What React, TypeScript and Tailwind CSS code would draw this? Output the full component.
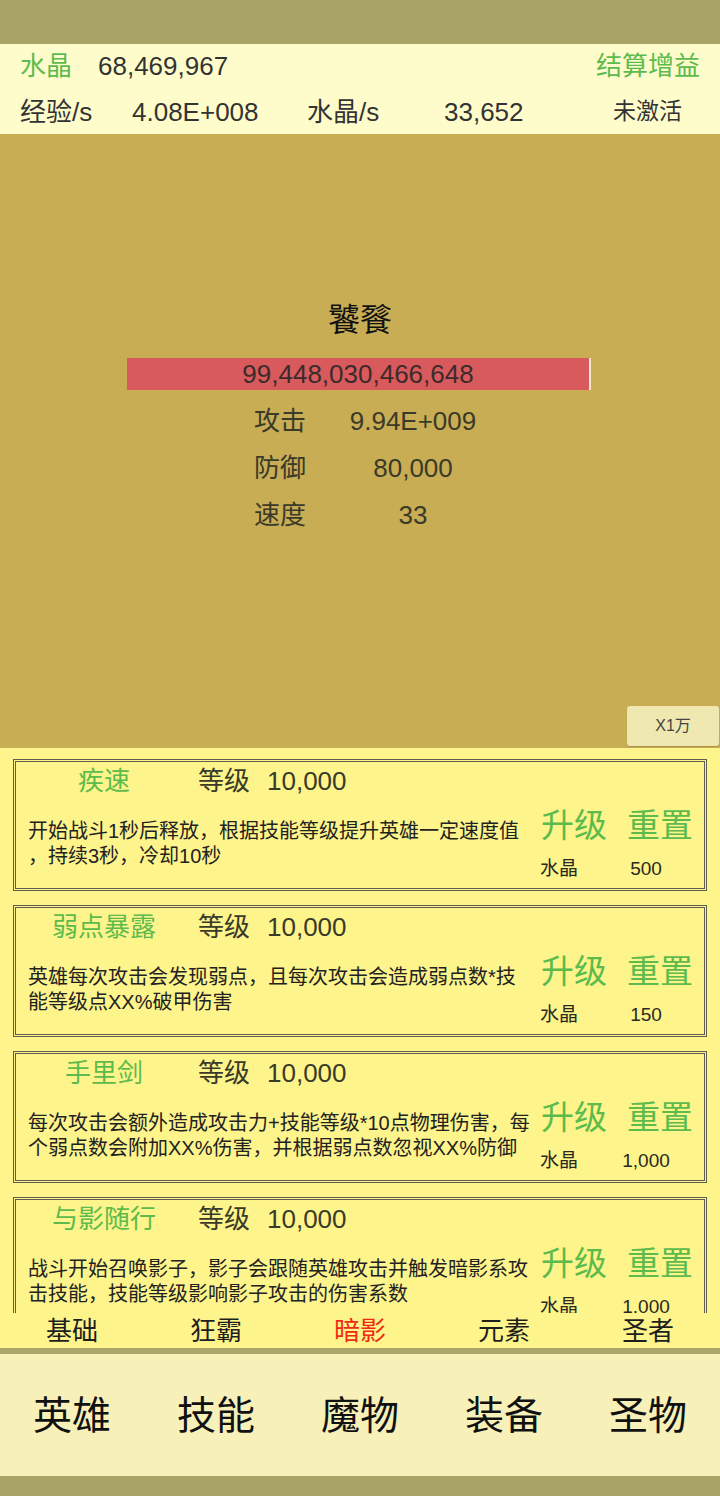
const FONT = "font-['Liberation_Sans','Noto_Sans_CJK_SC',sans-serif]";

type Skill = {
  name: string;
  lines: string[];
  cost: string;
};

const skills: Skill[] = [
  {
    name: "疾速",
    lines: ["开始战斗1秒后释放，根据技能等级提升英雄一定速度值", "，持续3秒，冷却10秒"],
    cost: "500",
  },
  {
    name: "弱点暴露",
    lines: ["英雄每次攻击会发现弱点，且每次攻击会造成弱点数*技", "能等级点XX%破甲伤害"],
    cost: "150",
  },
  {
    name: "手里剑",
    lines: ["每次攻击会额外造成攻击力+技能等级*10点物理伤害，每", "个弱点数会附加XX%伤害，并根据弱点数忽视XX%防御"],
    cost: "1,000",
  },
  {
    name: "与影随行",
    lines: ["战斗开始召唤影子，影子会跟随英雄攻击并触发暗影系攻", "击技能，技能等级影响影子攻击的伤害系数"],
    cost: "1,000",
  },
];

const subTabs = ["基础", "狂霸", "暗影", "元素", "圣者"];
const mainTabs = ["英雄", "技能", "魔物", "装备", "圣物"];

function SkillCard({ skill }: { skill: Skill }) {
  return (
    <div className="h-[132px] shrink-0 border-[3px] border-double border-[#5f5e50] bg-[#fdf48b] flex flex-col">
      {/* 名称 + 等级 */}
      <div className="h-[38px] flex items-center text-[26px] leading-none">
        <div className="w-[176px] text-center text-[#5cbb4c]">{skill.name}</div>
        <span className="ml-[6px] text-[#3a3a28]">等级</span>
        <span className="ml-[17px] text-[#3a3a28]">10,000</span>
      </div>
      <div className="flex flex-1">
        <div className="w-[522px] pl-3 flex flex-col justify-center text-[20px] leading-[25px] text-[#222] whitespace-nowrap overflow-hidden">
          {skill.lines.map((l) => (
            <div key={l}>{l}</div>
          ))}
        </div>
        <div className="flex-1 flex flex-col pt-[5px]">
          <div className="h-[40px] flex items-center text-[33px] leading-none text-[#5cbb4c]">
            <span className="ml-[3px]">升级</span>
            <span className="ml-[20px]">重置</span>
          </div>
          <div className="mt-[11px] h-[24px] flex items-center text-[19px] leading-none text-[#2a2a20]">
            <span className="ml-[2px] w-[60px]">水晶</span>
            <span className="w-[92px] text-center">{skill.cost}</span>
          </div>
        </div>
      </div>
    </div>
  );
}

export default function App() {
  return (
    <div className={`w-[720px] h-[1496px] flex flex-col overflow-hidden ${FONT}`}>
      <div className="h-[44px] shrink-0 bg-[#a9a465]" />

      {/* 顶部资源栏 */}
      <header className="h-[90px] shrink-0 bg-[#fefccb] px-5 text-[26px] leading-none">
        <div className="h-[44px] flex items-center">
          <span className="text-[#5cbb4c]">水晶</span>
          <span className="ml-[26px] text-[#333]">68,469,967</span>
          <span className="ml-auto text-[#5cbb4c]">结算增益</span>
        </div>
        <div className="h-[46px] flex items-center pt-[1px] text-[#333]">
          <span className="w-[112px]">经验/s</span>
          <span className="w-[175px]">4.08E+008</span>
          <span className="w-[137px]">水晶/s</span>
          <span className="w-[169px]">33,652</span>
          <span className="text-[23px]">未激活</span>
        </div>
      </header>

      {/* 战斗区域 */}
      <section className="h-[614px] shrink-0 bg-[#c8ad55] flex flex-col">
        <div className="pt-[166px] h-[206px] text-center text-[32px] leading-[40px] text-[#111]">饕餮</div>
        <div className="mt-[18px] ml-[127px] w-[464px] h-[32px] flex">
          <div className="flex-1 bg-[#d85a5c] flex items-center justify-center text-[26px] leading-none text-[#3b2b2b]">
            99,448,030,466,648
          </div>
          <div className="w-[2px] bg-[#f3e6cc]" />
        </div>
        <div className="mt-[7px] ml-[254px] flex flex-col text-[26px] leading-none text-[#3a3a28]">
          {[
            ["攻击", "9.94E+009"],
            ["防御", "80,000"],
            ["速度", "33"],
          ].map(([k, v]) => (
            <div key={k} className="h-[47px] flex items-center">
              <span className="w-[80px]">{k}</span>
              <span className="w-[158px] text-center">{v}</span>
            </div>
          ))}
        </div>
        <div className="mt-auto mb-[2px] mr-[1px] flex justify-end">
          <button className="w-[92px] h-[40px] rounded-[3px] bg-[#efe8b0] text-[16px] text-[#444] shadow-[0_1px_1px_rgba(0,0,0,0.15)]">
            X1万
          </button>
        </div>
      </section>

      {/* 技能列表 */}
      <section className="h-[565px] shrink-0 bg-[#fdf48b] overflow-hidden px-[13px] pt-[11px] flex flex-col gap-[14px]">
        {skills.map((s) => (
          <SkillCard key={s.name} skill={s} />
        ))}
      </section>

      {/* 技能分类 */}
      <nav className="h-[35px] shrink-0 bg-[#fdf48b] grid grid-cols-5 text-[26px] leading-none">
        {subTabs.map((t) => (
          <div
            key={t}
            className={`flex items-center justify-center ${t === "暗影" ? "text-[#ee2a14]" : "text-[#1e1e1e]"}`}
          >
            {t}
          </div>
        ))}
      </nav>
      <div className="h-[6px] shrink-0 bg-[#aaa568]" />

      {/* 主导航 */}
      <nav className="h-[122px] shrink-0 bg-[#f7f1b9] grid grid-cols-5 text-[39px] leading-none text-[#111]">
        {mainTabs.map((t) => (
          <div key={t} className="flex items-center justify-center">
            {t}
          </div>
        ))}
      </nav>
      <div className="h-[20px] shrink-0 bg-[#a9a465]" />
    </div>
  );
}
